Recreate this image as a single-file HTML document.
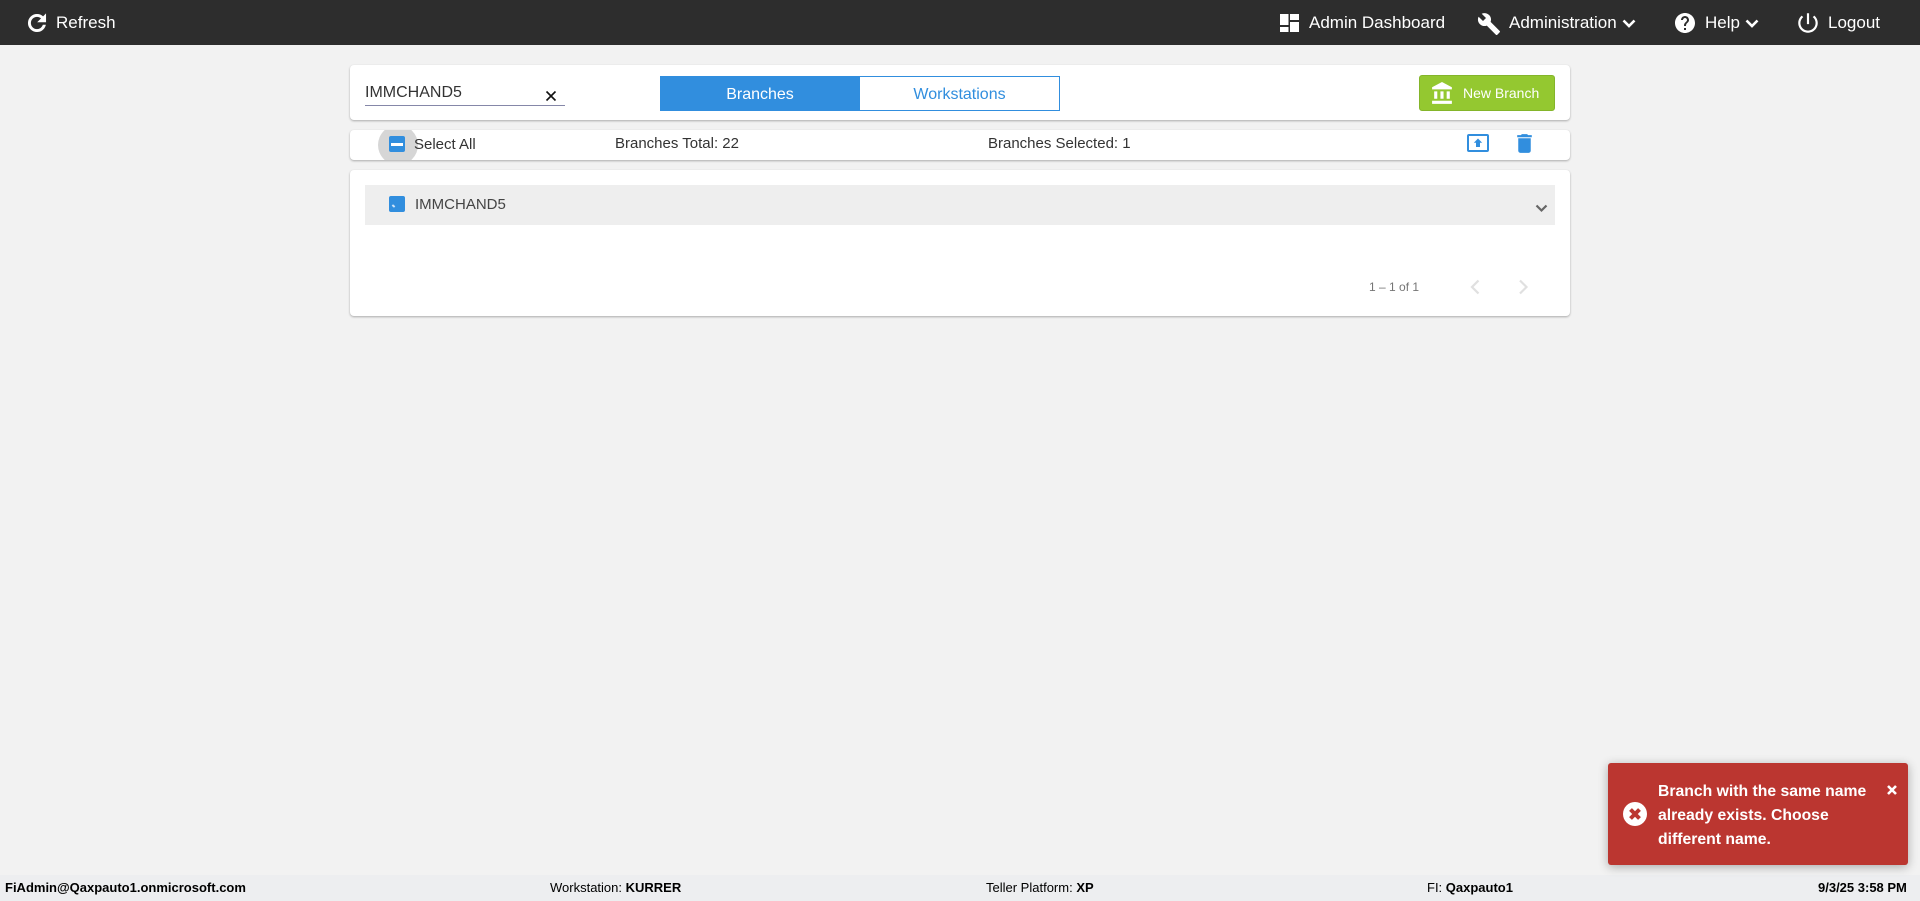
<!DOCTYPE html>
<html><head><meta charset="utf-8"><title>Branches</title>
<style>
html,body{margin:0;padding:0;width:1920px;height:901px;overflow:hidden;background:#f2f2f2;font-family:"Liberation Sans",Arial,sans-serif;color:#333}
.a{position:absolute;white-space:nowrap}
svg{position:absolute;display:block}
.nav{color:#fff;font-size:17px;line-height:20px;top:13px}
.card{position:absolute;left:350px;width:1220px;background:#fff;border-radius:4px;box-shadow:0 1px 2px rgba(0,0,0,.3);overflow:hidden}
.foot{font-size:13px;line-height:16px;top:880px;color:#000}
b{font-weight:700}
</style></head><body>
<div class="a" style="left:0;top:0;width:1920px;height:45px;background:#2d2d2d"></div>
<svg style="left:24px;top:10px" width="26" height="26" viewBox="0 0 24 24" fill="#fff" stroke="#fff" stroke-width=".7"><path d="M17.65 6.35C16.2 4.9 14.21 4 12 4c-4.42 0-7.99 3.58-7.99 8s3.57 8 7.99 8c3.73 0 6.84-2.55 7.73-6h-2.08c-.82 2.33-3.04 4-5.65 4-3.31 0-6-2.69-6-6s2.69-6 6-6c1.66 0 3.14.69 4.22 1.78L13 11h7V4l-2.35 2.35z"/></svg>
<span class="a nav" style="left:56px">Refresh</span>
<svg style="left:1280px;top:14px" width="19" height="18" viewBox="0 0 19 18" fill="#fff"><rect x="0" y="0" width="8.5" height="11"/><rect x="0" y="13" width="8.5" height="5"/><rect x="10" y="0" width="9" height="6"/><rect x="10" y="8" width="9" height="10"/></svg>
<span class="a nav" style="left:1309px">Admin Dashboard</span>
<svg style="left:1477px;top:12px" width="24" height="24" viewBox="0 0 24 24" fill="#fff"><path d="M22.7 19l-9.1-9.1c.9-2.3.4-5-1.5-6.9-2-2-5-2.4-7.4-1.3L9 6 6 9 1.6 4.7C.4 7.1.9 10.1 2.9 12.1c1.9 1.9 4.6 2.4 6.9 1.5l9.1 9.1c.4.4 1 .4 1.4 0l2.3-2.3c.5-.4.5-1.1.1-1.4z"/></svg>
<span class="a nav" style="left:1509px">Administration</span>
<svg style="left:1622px;top:19px" width="14" height="9" viewBox="0 0 14 9" fill="none" stroke="#fff" stroke-width="2.6"><path d="M1.5 1.5l5.5 5.5 5.5-5.5"/></svg>
<svg style="left:1673px;top:11px" width="24" height="24" viewBox="0 0 24 24" fill="#fff"><path d="M12 2C6.48 2 2 6.48 2 12s4.48 10 10 10 10-4.48 10-10S17.52 2 12 2zm1 17h-2v-2h2v2zm2.07-7.75l-.9.92C13.45 12.9 13 13.5 13 15h-2v-.5c0-1.1.45-2.1 1.17-2.83l1.24-1.26c.37-.36.59-.86.59-1.41 0-1.1-.9-2-2-2s-2 .9-2 2H8c0-2.21 1.79-4 4-4s4 1.79 4 4c0 .88-.36 1.68-.93 2.25z"/></svg>
<span class="a nav" style="left:1705px">Help</span>
<svg style="left:1745px;top:19px" width="14" height="9" viewBox="0 0 14 9" fill="none" stroke="#fff" stroke-width="2.6"><path d="M1.5 1.5l5.5 5.5 5.5-5.5"/></svg>
<svg style="left:1795px;top:10px" width="26" height="26" viewBox="0 0 24 24" fill="#fff"><path d="M13 3h-2v10h2V3zm4.83 2.17l-1.42 1.42C17.99 7.86 19 9.81 19 12c0 3.87-3.13 7-7 7s-7-3.13-7-7c0-2.19 1.01-4.14 2.58-5.42L6.17 5.17C4.23 6.82 3 9.26 3 12c0 4.97 4.03 9 9 9s9-4.03 9-9c0-2.74-1.23-5.18-3.17-6.83z"/></svg>
<span class="a nav" style="left:1828px">Logout</span>

<div class="card" style="top:65px;height:55px"></div>
<span class="a" style="left:365px;top:84px;font-size:16px;line-height:18px;color:#333">IMMCHAND5</span>
<div class="a" style="left:365px;top:105px;width:200px;height:1px;background:#8587a8"></div>
<svg style="left:545px;top:90px" width="12" height="12" viewBox="0 0 12 12" fill="none" stroke="#111" stroke-width="1.6"><path d="M1.5 1.5l9 9M10.5 1.5l-9 9"/></svg>
<div class="a" style="left:660px;top:76px;width:200px;height:35px;background:#318ede;color:#fff;font-size:16px;line-height:37px;text-align:center">Branches</div>
<div class="a" style="left:860px;top:76px;width:199px;height:33px;border:1px solid #318ede;border-left:0;background:#fff;color:#318ede;font-size:16px;line-height:35px;text-align:center">Workstations</div>
<div class="a" style="left:1419px;top:75px;width:134px;height:34px;border:1px solid #84b52a;border-radius:3px;background:#94c830"></div>
<svg style="left:1430px;top:81px" width="25" height="25" viewBox="0 0 24 24" fill="#fff"><path d="M4 10v7h3v-7H4zm6 0v7h3v-7h-3zM2 22h19v-3H2v3zm14-12v7h3v-7h-3zm-4.5-9L2 6v2h19V6l-9.5-5z"/></svg>
<span class="a" style="left:1463px;top:85px;font-size:14px;line-height:16px;color:#fff">New Branch</span>

<div class="card" style="top:130px;height:30px">
  <div class="a" style="left:28px;top:-5px;width:40px;height:40px;border-radius:50%;background:#d6d6d6"></div>
</div>
<div class="a" style="left:389px;top:136px;width:16px;height:16px;border-radius:2px;background:#318ede"></div>
<div class="a" style="left:391px;top:143px;width:12px;height:2.5px;background:#fff"></div>
<span class="a" style="left:414px;top:136px;font-size:15px;line-height:18px;color:#333">Select All</span>
<span class="a" style="left:615px;top:135px;font-size:15px;line-height:18px;color:#333">Branches Total: 22</span>
<span class="a" style="left:988px;top:135px;font-size:15px;line-height:18px;color:#333">Branches Selected: 1</span>
<svg style="left:1467px;top:134px" width="22" height="18" viewBox="0 0 22 18"><rect x="1" y="1" width="20" height="16" rx="1" fill="none" stroke="#318ede" stroke-width="2"/><path d="M11 4.500l4.200 4.200h-2.200V13H9V8.700H6.800z" fill="#318ede"/></svg>
<svg style="left:1512px;top:131px" width="25" height="25" viewBox="0 0 24 24" fill="#318ede"><path d="M6 19c0 1.100.9 2 2 2h8c1.100 0 2-.9 2-2V7H6v12zM19 4h-3.500l-1-1h-5l-1 1H5v2h14V4z"/></svg>

<div class="card" style="top:170px;height:146px"></div>
<div class="a" style="left:365px;top:185px;width:1190px;height:40px;background:#eee"></div>
<div class="a" style="left:389px;top:196px;width:16px;height:16px;border-radius:2px;background:#318ede"></div>
<div class="a" style="left:392px;top:205px;width:3px;height:2px;background:#cfe4f8;transform:rotate(40deg)"></div>
<span class="a" style="left:415px;top:196px;font-size:15px;line-height:18px;color:#444">IMMCHAND5</span>
<svg style="left:1535px;top:204px" width="13" height="9" viewBox="0 0 13 9" fill="none" stroke="#666" stroke-width="2.2"><path d="M1.500 1.500l5 5 5-5"/></svg>
<span class="a" style="left:1369px;top:280px;font-size:12px;line-height:14px;color:#757575">1 – 1 of 1</span>
<svg style="left:1470px;top:279px" width="11" height="16" viewBox="0 0 11 16" fill="none" stroke="#e0e0e0" stroke-width="2.2"><path d="M8.500 1.500L2 8l6.500 6.500"/></svg>
<svg style="left:1518px;top:279px" width="11" height="16" viewBox="0 0 11 16" fill="none" stroke="#e0e0e0" stroke-width="2.2"><path d="M2 1.500L8.500 8 2 14.500"/></svg>

<div class="a" style="left:0;top:875px;width:1920px;height:26px;background:#edeef0"></div>
<span class="a foot" style="left:5px"><b>FiAdmin@Qaxpauto1.onmicrosoft.com</b></span>
<span class="a foot" style="left:550px">Workstation: <b>KURRER</b></span>
<span class="a foot" style="left:986px">Teller Platform: <b>XP</b></span>
<span class="a foot" style="left:1427px">FI: <b>Qaxpauto1</b></span>
<span class="a foot" style="left:1818px"><b>9/3/25 3:58 PM</b></span>

<div class="a" style="left:1608px;top:763px;width:300px;height:102px;background:#bb3630;border-radius:3px;box-shadow:0 2px 10px rgba(0,0,0,.3)"></div>
<svg style="left:1623px;top:802px" width="24" height="24" viewBox="0 0 24 24"><circle cx="12" cy="12" r="12" fill="#fff"/><path d="M7.500 7.500l9 9M16.500 7.500l-9 9" stroke="#bb3630" stroke-width="4" fill="none"/></svg>
<div class="a" style="left:1658px;top:780px;font-size:15.75px;line-height:24px;font-weight:700;color:#fff;font-family:'Liberation Sans',sans-serif">Branch with the same name<br>already exists. Choose<br>different name.</div>
<svg style="left:1887px;top:785px" width="10" height="10" viewBox="0 0 10 10" fill="none" stroke="#fff" stroke-width="2.6"><path d="M1 1l8 8M9 1l-8 8"/></svg>
</body></html>
